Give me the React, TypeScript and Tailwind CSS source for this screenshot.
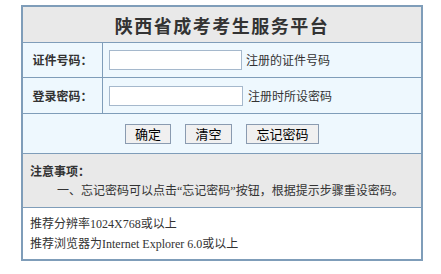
import React from "react";

const font = { fontFamily: '"Liberation Serif", "Noto Sans CJK SC", serif' };
const cjk = { fontFamily: '"Noto Sans CJK SC", sans-serif' };

export default function App() {
  return (
    <div className="w-[441px] h-[274px] bg-white pt-[5px] pl-[21px]" style={font}>
      <div className="w-[402px] border-2 border-[#7f9db9] text-[#333333] text-[12px]">
        <div className="h-[36px] bg-[#e9e9e9] border-b border-[#7f9db9] flex items-center justify-center">
          <span className="text-[18px] font-bold tracking-[1.5px] text-[#333333] leading-none" style={cjk}>
            陕西省成考考生服务平台
          </span>
        </div>
        <div className="flex h-[35px] border-b border-[#7f9db9] bg-[#eef8fe]">
          <div className="w-[80px] border-r border-[#7f9db9] flex items-center justify-center font-bold" style={cjk}>
            证件号码：
          </div>
          <div className="flex items-center pl-[6px]">
            <input className="w-[133px] h-[20px] bg-white border border-[#a5b8cc] outline-none" />
            <span className="ml-[4px]" style={cjk}>注册的证件号码</span>
          </div>
        </div>
        <div className="flex h-[36px] border-b border-[#7f9db9] bg-[#eef8fe]">
          <div className="w-[80px] border-r border-[#7f9db9] flex items-center justify-center font-bold" style={cjk}>
            登录密码：
          </div>
          <div className="flex items-center pl-[6px]">
            <input type="password" className="w-[134px] h-[20px] bg-white border border-[#a5b8cc] outline-none" />
            <span className="ml-[5px]" style={cjk}>注册时所设密码</span>
          </div>
        </div>
        <div className="h-[40px] border-b border-[#7f9db9] bg-[#eef8fe] flex items-center justify-center gap-[14px]" style={cjk}>
          <button className="w-[46px] h-[20px] bg-[#f0f0f0] border border-[#8a9bb0] text-[13px] leading-none text-black">确定</button>
          <button className="w-[47px] h-[20px] bg-[#f0f0f0] border border-[#8a9bb0] text-[13px] leading-none text-black">清空</button>
          <button className="w-[73px] h-[20px] bg-[#f0f0f0] border border-[#8a9bb0] text-[13px] leading-none text-black">忘记密码</button>
        </div>
        <div className="h-[54px] border-b border-[#7f9db9] bg-[#e9e9e9] pt-[7px] pl-[7px] leading-[20px]">
          <div className="font-bold" style={cjk}>注意事项：</div>
          <div className="pl-[27px] whitespace-nowrap" style={font}>一、忘记密码可以点击“忘记密码”按钮，根据提示步骤重设密码。</div>
        </div>
        <div className="h-[51px] bg-white pt-[6px] pl-[7px] leading-[20px]">
          <div>推荐分辨率1024X768或以上</div>
          <div>推荐浏览器为Internet Explorer 6.0或以上</div>
        </div>
      </div>
    </div>
  );
}
